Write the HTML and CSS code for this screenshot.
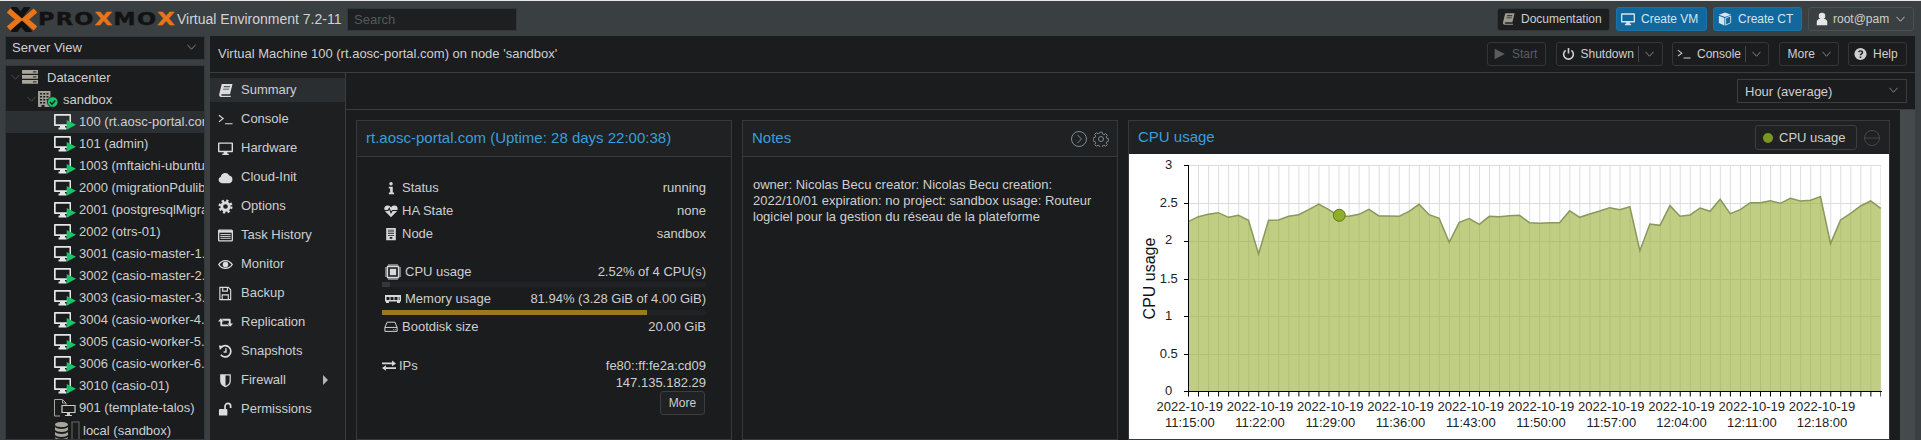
FILE: index.html
```html
<!DOCTYPE html>
<html lang="en">
<head>
  <meta charset="UTF-8">
  <title>sandbox - Proxmox Virtual Environment</title>
  <link rel="stylesheet" href="styles.css">
</head>
<body>

<svg class="icon-defs">
  <symbol id="i-chev" viewBox="0 0 10 6"><path d="M.5.5 5 5.500 9.500.5" fill="none" stroke="currentColor"/></symbol>
  <symbol id="i-book" viewBox="0 0 16 16"><path fill="currentColor" fill-rule="evenodd" d="M4 1h11.500l-2.700 11H4.500c-1.500 0-1.500 1.700 0 1.700h9.300l-.4 1.300H3.500C1.500 15 1 13.500 1.300 12zm2.300 2.500-.3 1h6.500l.3-1zM5.600 6l-.3 1h6.500l.3-1z"/></symbol>
  <symbol id="i-term" viewBox="0 0 16 16"><path fill="none" stroke="currentColor" stroke-width="1.200" d="m1 3.500 4.500 3.500L1 10.500M7.500 12.500H15.500"/></symbol>
  <symbol id="i-desktop" viewBox="0 0 16 16"><path fill="currentColor" fill-rule="evenodd" d="M1 1.500h14c.6 0 1 .4 1 1V11c0 .6-.4 1-1 1H9.800l.4 1.500H11.500V15h-7v-1.500h1.300L6.200 12H1c-.6 0-1-.4-1-1V2.500c0-.6.4-1 1-1zM1.500 3v7.300h13V3z"/></symbol>
  <symbol id="i-cloud" viewBox="0 0 16 16"><path fill="currentColor" d="M3.800 14a3.500 3.500 0 0 1-.8-6.800A4.800 4.800 0 0 1 12 5.800a4.200 4.200 0 0 1 .2 8.200z"/></symbol>
  <symbol id="i-gear" viewBox="0 0 16 16"><circle cx="8" cy="8" r="4" fill="none" stroke="currentColor" stroke-width="3"/><circle cx="8" cy="8" r="6.300" fill="none" stroke="currentColor" stroke-width="2.400" stroke-dasharray="2.500 2.450"/></symbol>
  <symbol id="i-gear-line" viewBox="0 0 16 16"><circle cx="8" cy="8" r="2.500" fill="none" stroke="currentColor"/><path fill="none" stroke="currentColor" d="M6.800.8h2.400l.4 2 1.500.7 1.800-1.100 1.700 1.700-1.100 1.800.7 1.500 2 .4v2.400l-2 .4-.7 1.500 1.100 1.800-1.700 1.700-1.800-1.100-1.500.7-.4 2H6.800l-.4-2-1.500-.7-1.800 1.100-1.700-1.700 1.100-1.800-.7-1.500-2-.4V6.800l2-.4.7-1.500-1.100-1.800 1.700-1.700 1.800 1.100 1.500-.7z" transform="translate(.4 .4) scale(.95)"/></symbol>
  <symbol id="i-list" viewBox="0 0 16 16"><rect x=".7" y="2.200" width="14.600" height="11.600" rx="1" fill="none" stroke="currentColor" stroke-width="1.400"/><path fill="currentColor" d="M1 2.500h14V5H1z"/><path stroke="currentColor" d="M2.500 7h11M2.500 9h11M2.500 11h11"/></symbol>
  <symbol id="i-eye" viewBox="0 0 16 16"><path fill="currentColor" fill-rule="evenodd" d="M0 8c2-3.200 4.800-4.800 8-4.800S14 4.800 16 8c-2 3.200-4.800 4.800-8 4.800S2 11.200 0 8zm1.600 0c1.700 2.200 3.900 3.500 6.400 3.500s4.700-1.300 6.400-3.500C12.700 5.800 10.500 4.500 8 4.500S3.300 5.800 1.600 8z"/><circle cx="8" cy="8" r="3" fill="currentColor"/></symbol>
  <symbol id="i-save" viewBox="0 0 16 16"><path fill="none" stroke="currentColor" stroke-width="1.200" d="M2 1.500h9l2.500 2.500v10.500H2zM5 1.500v4h5v-4M4.500 14.500V9.500h6.500v5"/></symbol>
  <symbol id="i-retweet" viewBox="0 0 16 16"><path fill="currentColor" d="M0 7 3 3.500 6 7H4.500v3H10l2 2H3.500c-.6 0-1-.4-1-1V7zM16 9l-3 3.500L10 9h1.500V6H6L4 4h8.500c.6 0 1 .4 1 1v4z"/></symbol>
  <symbol id="i-history" viewBox="0 0 16 16"><path fill="none" stroke="currentColor" stroke-width="1.800" d="M3.500 3.500A6 6 0 1 1 3 11.500"/><path fill="currentColor" d="M1 1.500 6 2 2 6.500z"/><path fill="none" stroke="currentColor" stroke-width="1.500" d="M8.500 4.500V8.500H6"/></symbol>
  <symbol id="i-shield" viewBox="0 0 16 16"><path fill="none" stroke="currentColor" stroke-width="1.300" d="M3 2h10v6.500c0 3-2.500 5-5 6-2.500-1-5-3-5-6z"/><path fill="currentColor" d="M3 2h5v12.500c-2.500-1-5-3-5-6z"/></symbol>
  <symbol id="i-unlock" viewBox="0 0 16 16"><rect x="1" y="7.500" width="9" height="7" rx="1" fill="currentColor"/><path fill="none" stroke="currentColor" stroke-width="1.800" d="M7.500 7.500V4.500a3 3 0 0 1 6 0v2"/></symbol>
  <symbol id="i-info" viewBox="0 0 16 16"><circle cx="8" cy="3" r="2" fill="currentColor"/><path fill="currentColor" d="M5.500 6.500H10V13h1.500v2h-6v-2H7V8.500H5.500z"/></symbol>
  <symbol id="i-heart" viewBox="0 0 16 16"><path fill="currentColor" d="M8 15 1.500 8.500C-.5 6.300 0 2 4 1.800 6 1.700 7.300 2.800 8 4c.7-1.200 2-2.300 4-2.200 4 .2 4.500 4.500 2.500 6.700z"/><path fill="none" stroke="#1a1c1e" stroke-width="1.200" d="M0 7.500h4.500l1.500-2.500 2 5 1.500-2.500H16"/></symbol>
  <symbol id="i-node" viewBox="0 0 16 16"><path fill="currentColor" fill-rule="evenodd" d="M2.500 1h11v14h-11zM4.500 3v1h7V3zm0 2v1h7V5zm0 2v1h7V7zm0 2v1h7V9zm2 2.500v2h3v-2z"/></symbol>
  <symbol id="i-cpu" viewBox="0 0 16 16"><path fill="none" stroke="currentColor" stroke-width="1.300" d="M2.500 2.500h11v11h-11z"/><rect x="4.800" y="4.800" width="6.400" height="6.400" fill="currentColor"/><path fill="none" stroke="currentColor" d="M4 0v2M6 0v2M8 0v2M10 0v2M12 0v2M4 14v2M6 14v2M8 14v2M10 14v2M12 14v2M0 4h2M0 6h2M0 8h2M0 10h2M0 12h2M14 4h2M14 6h2M14 8h2M14 10h2M14 12h2"/></symbol>
  <symbol id="i-mem" viewBox="0 0 16 8"><path fill="currentColor" fill-rule="evenodd" d="M0 0h16v6.500h-1V8h-3V6.500H4V8H1V6.500H0zM1.500 2v3h3V2zm4 0v3h3V2zm4 0v3h3V2zm4.300 0v3h.7V2z"/></symbol>
  <symbol id="i-hdd" viewBox="0 0 16 16"><path fill="none" stroke="currentColor" stroke-width="1.100" d="M1 8.500 3.500 2.500h9l2.500 6v4.500H1zM1 8.500h14"/><path stroke="currentColor" d="M10.500 11h1M12.500 11h1"/></symbol>
  <symbol id="i-swap" viewBox="0 0 16 16"><path fill="currentColor" d="M0 4h11.500V1.500L16 5l-4.500 3.500V6H0zM16 12H4.500v2.500L0 11l4.500-3.500V10H16z" transform="translate(0 .5) scale(1 .9)"/></symbol>
  <symbol id="i-cube" viewBox="0 0 16 16"><path fill="currentColor" d="M8 .5 15 3 8 5.700 1 3zM1 4.300 7.300 6.800V15.500L1 12.500z"/><path fill="none" stroke="currentColor" d="M8.700 7 14.500 4.500v7.700L8.700 15z"/></symbol>
  <symbol id="i-user" viewBox="0 0 16 16"><circle cx="8" cy="4.500" r="3.700" fill="currentColor"/><path fill="currentColor" d="M2 15v-3.500C2 9.500 3.500 8 5 8h6c1.500 0 3 1.500 3 3.500V15z"/></symbol>
  <symbol id="i-play" viewBox="0 0 16 16"><path fill="currentColor" d="M2 1.500 14.500 8 2 14.500z"/></symbol>
  <symbol id="i-power" viewBox="0 0 16 16"><path fill="none" stroke="currentColor" stroke-width="2" d="M4.500 3.500a6 6 0 1 0 7 0M8 .5v7"/></symbol>
  <symbol id="i-help" viewBox="0 0 16 16"><path fill="currentColor" fill-rule="evenodd" d="M8 .5a7.500 7.500 0 1 0 0 15 7.500 7.500 0 0 0 0-15zM7 11h2v2H7zm0-1.500c0-2.200 2.300-2.200 2.300-3.500 0-.7-.6-1-1.300-1-.8 0-1.300.4-1.700 1L4.900 5.200C5.500 4 6.600 3.300 8.100 3.300c1.800 0 3.200 1 3.200 2.700 0 2.200-2.400 2.300-2.400 3.500z"/></symbol>
  <symbol id="i-server" viewBox="0 0 16 14"><path fill="#a8a59c" d="M0 0h16v3.800H0zM0 5h16v3.800H0zM0 10h16v3.800H0z"/><path stroke="#1a1c1e" d="M11 1.900h3.500M11 6.900h3.500M11 11.900h3.500"/></symbol>
  <symbol id="i-building" viewBox="0 0 20 18"><path fill="#a09c94" fill-rule="evenodd" d="M0 1h12.500v16H0zM2 3v1.500h2V3zm3.200 0v1.500h2V3zm3.300 0v1.500h2V3zM2 6v1.500h2V6zm3.200 0v1.500h2V6zm3.300 0v1.500h2V6zM2 9v1.500h2V9zm3.200 0v1.500h2V9zm3.300 0v1.500h2V9zM2 12v1.500h2V12zm3.200 0v1.500h2V12zM3.500 15v2h3v-2z"/><circle cx="14.700" cy="12" r="5.300" fill="#1bc46a" stroke="#1a1c1e" stroke-width=".8"/><path fill="none" stroke="#1a1c1e" stroke-width="1.500" d="m12 12 2 2.200 3.300-3.700"/></symbol>
  <symbol id="i-vm" viewBox="0 0 22 16"><path fill="#e6e6e6" fill-rule="evenodd" d="M1 0h15c.6 0 1 .4 1 1v10c0 .6-.4 1-1 1H11v1.500H12.500V15.500H4.500V13.500H6V12H1c-.6 0-1-.4-1-1V1c0-.6.4-1 1-1zM1.700 1.700v8.500h13.800V1.700z"/><path fill="#16c46c" d="M12.700 6 22 10.800l-9.300 4.900z"/></symbol>
  <symbol id="i-template" viewBox="0 0 22 18"><path fill="none" stroke="#a8a59c" d="M.5 17V.5h8L12 4v2M.5 17H6M8.500.5V4H12"/><path fill="none" stroke="#d0cdc4" stroke-width="1.200" d="M8 6.500h13v7H8z"/><path fill="#d0cdc4" d="M13 14h3v2h2v1h-7v-1h2z"/></symbol>
  <symbol id="i-store" viewBox="0 0 26 20"><path fill="#a8a59c" d="M1 3.500c0-3.500 13-3.500 13 0s-13 3.500-13 0zM1 6c2 2.500 11 2.500 13 0v3c-2 2.500-11 2.500-13 0zM1 11c2 2.500 11 2.500 13 0v3c-2 2.500-11 2.500-13 0zM1 16c2 2.500 11 2.500 13 0 0 5-13 5-13 0z"/><rect x="18" y="1" width="7" height="18" fill="none" stroke="#6a6862"/></symbol>
</svg>

<div class="page">
  <header class="topbar">
    <div class="logo">
      <svg class="logo-x" viewBox="0 0 30 25">
        <path class="logo-dark" d="M6 -1 13.500 9 21 -1M6 26 14 16 23 26"/>
        <path class="logo-orange" d="M1.500 3.500 12 12.500 1.500 21.500M28.500 3.500 18 12.500 28.500 21.500"/>
      </svg>
      <span class="logo-word">PRO<b>X</b>MO<b>X</b></span>
    </div>
    <span class="version">Virtual Environment 7.2-11</span>
    <input class="search" type="text" placeholder="Search">
    <div class="top-actions">
      <button class="btn btn-docs"><svg class="icon"><use href="#i-book"/></svg>Documentation</button>
      <button class="btn btn-blue btn-vm"><svg class="icon"><use href="#i-desktop"/></svg>Create VM</button>
      <button class="btn btn-blue btn-ct"><svg class="icon"><use href="#i-cube"/></svg>Create CT</button>
      <button class="btn btn-user"><svg class="icon"><use href="#i-user"/></svg>root@pam<svg class="chev"><use href="#i-chev"/></svg></button>
    </div>
  </header>

  <aside class="side">
    <div class="view-combo">Server View<svg class="chev"><use href="#i-chev"/></svg></div>
    <ul class="tree">
      <li class="tree-row"><svg class="chev tree-chev"><use href="#i-chev"/></svg><svg class="tree-server"><use href="#i-server"/></svg>Datacenter</li>
      <li class="tree-row tree-node"><svg class="chev tree-chev"><use href="#i-chev"/></svg><svg class="tree-building"><use href="#i-building"/></svg>sandbox</li>
      <li class="tree-row tree-leaf is-selected"><svg class="tree-vm"><use href="#i-vm"/></svg>100 (rt.aosc-portal.com)</li>
      <li class="tree-row tree-leaf"><svg class="tree-vm"><use href="#i-vm"/></svg>101 (admin)</li>
      <li class="tree-row tree-leaf"><svg class="tree-vm"><use href="#i-vm"/></svg>1003 (mftaichi-ubuntu)</li>
      <li class="tree-row tree-leaf"><svg class="tree-vm"><use href="#i-vm"/></svg>2000 (migrationPdulib)</li>
      <li class="tree-row tree-leaf"><svg class="tree-vm"><use href="#i-vm"/></svg>2001 (postgresqlMigration)</li>
      <li class="tree-row tree-leaf"><svg class="tree-vm"><use href="#i-vm"/></svg>2002 (otrs-01)</li>
      <li class="tree-row tree-leaf"><svg class="tree-vm"><use href="#i-vm"/></svg>3001 (casio-master-1.lan)</li>
      <li class="tree-row tree-leaf"><svg class="tree-vm"><use href="#i-vm"/></svg>3002 (casio-master-2.lan)</li>
      <li class="tree-row tree-leaf"><svg class="tree-vm"><use href="#i-vm"/></svg>3003 (casio-master-3.lan)</li>
      <li class="tree-row tree-leaf"><svg class="tree-vm"><use href="#i-vm"/></svg>3004 (casio-worker-4.lan)</li>
      <li class="tree-row tree-leaf"><svg class="tree-vm"><use href="#i-vm"/></svg>3005 (casio-worker-5.lan)</li>
      <li class="tree-row tree-leaf"><svg class="tree-vm"><use href="#i-vm"/></svg>3006 (casio-worker-6.lan)</li>
      <li class="tree-row tree-leaf"><svg class="tree-vm"><use href="#i-vm"/></svg>3010 (casio-01)</li>
      <li class="tree-row tree-leaf"><svg class="tree-vm tree-tpl"><use href="#i-template"/></svg>901 (template-talos)</li>
      <li class="tree-row tree-leaf tree-store"><svg class="tree-storage"><use href="#i-store"/></svg>local (sandbox)</li>
    </ul>
  </aside>

  <main class="main">
    <div class="titlebar">
      <span class="vm-title">Virtual Machine 100 (rt.aosc-portal.com) on node 'sandbox'</span>
      <div class="vm-actions">
        <button class="tool tool-start"><svg class="icon"><use href="#i-play"/></svg>Start</button>
        <button class="tool tool-shutdown"><svg class="icon"><use href="#i-power"/></svg>Shutdown<span class="tool-sep"></span><svg class="chev"><use href="#i-chev"/></svg></button>
        <button class="tool tool-console"><svg class="icon"><use href="#i-term"/></svg>Console<span class="tool-sep"></span><svg class="chev"><use href="#i-chev"/></svg></button>
        <button class="tool tool-more">More<svg class="chev"><use href="#i-chev"/></svg></button>
        <button class="tool tool-help"><svg class="icon"><use href="#i-help"/></svg>Help</button>
      </div>
    </div>

    <div class="workspace">
      <nav class="menu">
        <a class="menu-item is-active"><svg class="icon"><use href="#i-book"/></svg>Summary</a>
        <a class="menu-item"><svg class="icon"><use href="#i-term"/></svg>Console</a>
        <a class="menu-item"><svg class="icon"><use href="#i-desktop"/></svg>Hardware</a>
        <a class="menu-item"><svg class="icon"><use href="#i-cloud"/></svg>Cloud-Init</a>
        <a class="menu-item"><svg class="icon"><use href="#i-gear"/></svg>Options</a>
        <a class="menu-item"><svg class="icon"><use href="#i-list"/></svg>Task History</a>
        <a class="menu-item"><svg class="icon"><use href="#i-eye"/></svg>Monitor</a>
        <a class="menu-item"><svg class="icon"><use href="#i-save"/></svg>Backup</a>
        <a class="menu-item"><svg class="icon"><use href="#i-retweet"/></svg>Replication</a>
        <a class="menu-item"><svg class="icon"><use href="#i-history"/></svg>Snapshots</a>
        <a class="menu-item">
          <svg class="icon"><use href="#i-shield"/></svg>Firewall
          <span class="menu-arrow"></span>
        </a>
        <a class="menu-item"><svg class="icon"><use href="#i-unlock"/></svg>Permissions</a>
      </nav>

      <section class="content">
        <div class="range-bar">
          <div class="range-combo">Hour (average)<svg class="chev"><use href="#i-chev"/></svg></div>
        </div>
        <div class="scroller">
          <div class="panels">

            <div class="panel">
              <div class="panel-head"><h3>rt.aosc-portal.com (Uptime: 28 days 22:00:38)</h3></div>
              <div class="panel-body status">
                <div class="stat"><svg class="stat-icon"><use href="#i-info"/></svg><span class="stat-name">Status</span><span>running</span></div>
                <div class="stat"><svg class="stat-icon"><use href="#i-heart"/></svg><span class="stat-name">HA State</span><span>none</span></div>
                <div class="stat"><svg class="stat-icon"><use href="#i-node"/></svg><span class="stat-name">Node</span><span>sandbox</span></div>

                <div class="stat stat-gap"><svg class="stat-icon stat-wide"><use href="#i-cpu"/></svg><span class="stat-name">CPU usage</span><span>2.52% of 4 CPU(s)</span></div>
                <div class="meter"><div class="meter-fill meter-cpu" style="width:2.52%"></div></div>
                <div class="stat"><svg class="stat-icon stat-wide"><use href="#i-mem"/></svg><span class="stat-name">Memory usage</span><span>81.94% (3.28 GiB of 4.00 GiB)</span></div>
                <div class="meter"><div class="meter-fill meter-mem" style="width:81.94%"></div></div>
                <div class="stat"><svg class="stat-icon"><use href="#i-hdd"/></svg><span class="stat-name">Bootdisk size</span><span>20.00 GiB</span></div>

                <div class="stat stat-ips"><svg class="stat-icon stat-swap"><use href="#i-swap"/></svg><span class="stat-name">IPs</span><span class="ip-list">fe80::ff:fe2a:cd09<br>147.135.182.29</span></div>
                <div class="more-row"><button class="tool more-btn">More</button></div>
              </div>
            </div>

            <div class="panel">
              <div class="panel-head panel-head-notes">
                <h3>Notes</h3>
                <svg class="notes-tool" viewBox="0 0 16 16"><circle cx="8" cy="8" r="7.500" fill="none" stroke="currentColor"/><path fill="none" stroke="currentColor" d="m6.500 4 4 4-4 4"/></svg>
                <svg class="notes-tool"><use href="#i-gear-line"/></svg>
              </div>
              <div class="panel-body notes">owner: Nicolas Becu creator: Nicolas Becu creation: 2022/10/01 expiration: no project: sandbox usage: Routeur logiciel pour la gestion du réseau de la plateforme</div>
            </div>

            <div class="panel panel-chart">
              <div class="panel-head chart-head">
                <h3>CPU usage</h3>
                <div class="legend"><span class="legend-dot"></span>CPU usage</div>
                <svg class="legend-off" viewBox="0 0 16 16"><circle cx="8" cy="8" r="7.500" fill="none" stroke="currentColor"/><path stroke="currentColor" d="M1 8h14"/></svg>
              </div>
              <div class="chart-body">
                <svg class="chart" width="760" height="286" viewBox="0 0 760 286">
                  <!-- grid -->
                  <path class="chart-grid" d="M59 11.500H752M59 49.500H752M59 87.500H752M59 125.500H752M59 162.500H752M59 200.500H752"/>
                  <line class="chart-grid" x1="59" y1="124" x2="752" y2="124" stroke-width="226" stroke-dasharray="1 9.035"/>
                  <!-- one point per minute, x is the minute, y is in the group's own units -->
                  <g transform="translate(59.300 -44) scale(10.035 .3333)">
                    <polygon class="chart-area" points="0,843 0,335 1,320 2,313 3,308 4,322 5,316 6,331 7,432 8,331 9,330 10,319 11,314 12,299 13,282 14,299 15,318 16,319 17,313 18,298 19,318 20,318 21,319 22,304 23,283 24,314 25,325 26,397 27,337 28,326 29,343 30,319 31,320 32,317 33,316 34,338 35,340 36,338 37,338 38,302 39,322 40,312 41,303 42,293 43,299 44,290 45,422 46,342 47,346 48,287 49,319 50,315 51,294 52,304 53,268 54,311 55,299 56,278 57,278 58,272 59,280 60,265 61,273 62,271 63,260 64,401 65,330 66,310 67,288 68,273 69,295 69,843"/>
                    <polyline class="chart-line" points="0,335 1,320 2,313 3,308 4,322 5,316 6,331 7,432 8,331 9,330 10,319 11,314 12,299 13,282 14,299 15,318 16,319 17,313 18,298 19,318 20,318 21,319 22,304 23,283 24,314 25,325 26,397 27,337 28,326 29,343 30,319 31,320 32,317 33,316 34,338 35,340 36,338 37,338 38,302 39,322 40,312 41,303 42,293 43,299 44,290 45,422 46,342 47,346 48,287 49,319 50,315 51,294 52,304 53,268 54,311 55,299 56,278 57,278 58,272 59,280 60,265 61,273 62,271 63,260 64,401 65,330 66,310 67,288 68,273 69,295"/>
                  </g>
                  <circle class="chart-marker" cx="210.300" cy="61.300" r="6"/>
                  <!-- axes -->
                  <path class="chart-axis" d="M59.500 11V238M59 237.500H753M55 11.500h4M55 49.500h4M55 87.500h4M55 125.500h4M55 162.500h4M55 200.500h4M55 237.500h4"/>
                  <line class="chart-axis" x1="59" y1="240" x2="752" y2="240" stroke-width="5" stroke-dasharray="1 9.035"/>
                  <!-- labels -->
                  <g class="chart-ticks">
                    <text x="39.700" y="14.500">3</text>
                    <text x="39.700" y="53">2.5</text>
                    <text x="39.700" y="90">2</text>
                    <text x="39.700" y="129">1.5</text>
                    <text x="39.700" y="166">1</text>
                    <text x="39.700" y="203.500">0.5</text>
                    <text x="39.700" y="241">0</text>
                  </g>
                  <g class="chart-ticks">
                    <text x="60.800" y="256.500">2022-10-19</text><text x="60.800" y="272.500">11:15:00</text>
                    <text x="131" y="256.500">2022-10-19</text><text x="131" y="272.500">11:22:00</text>
                    <text x="201.300" y="256.500">2022-10-19</text><text x="201.300" y="272.500">11:29:00</text>
                    <text x="271.500" y="256.500">2022-10-19</text><text x="271.500" y="272.500">11:36:00</text>
                    <text x="341.800" y="256.500">2022-10-19</text><text x="341.800" y="272.500">11:43:00</text>
                    <text x="412" y="256.500">2022-10-19</text><text x="412" y="272.500">11:50:00</text>
                    <text x="482.300" y="256.500">2022-10-19</text><text x="482.300" y="272.500">11:57:00</text>
                    <text x="552.500" y="256.500">2022-10-19</text><text x="552.500" y="272.500">12:04:00</text>
                    <text x="622.800" y="256.500">2022-10-19</text><text x="622.800" y="272.500">12:11:00</text>
                    <text x="693" y="256.500">2022-10-19</text><text x="693" y="272.500">12:18:00</text>
                  </g>
                  <text class="chart-title" transform="translate(25.500 124.500) rotate(-90)">CPU usage</text>
                </svg>
              </div>
            </div>

          </div>
          <div class="scrollbar"></div>
        </div>
      </section>
    </div>
  </main>
</div>

</body>
</html>
```

FILE: styles.css
```css
* {
  box-sizing: border-box;
}

html, body {
  margin: 0;
  height: 440px;
  overflow: hidden;
}

body {
  font-family: "Liberation Sans", Arial, sans-serif;
  font-size: 13px;
  color: #cfcfcf;
  background-color: #3a3f42;
}

button {
  font: inherit;
  color: inherit;
}

.icon-defs {
  display: none;
}

.page {
  display: grid;
  grid-template-columns: 210px 1fr;
  grid-template-rows: 35px 404px;
  height: 440px;
  border-top: 1px solid #e8e8e8;
}

/* top bar */
.topbar {
  grid-column: 1 / 3;
  display: flex;
  align-items: center;
  padding: 1px 7px 0 0;
}

.logo {
  display: flex;
  align-items: center;
  width: 177px;
  padding-left: 7px;
  flex-shrink: 0;
}

.logo-x {
  width: 30px;
  height: 25px;
  margin-right: 1px;
  flex-shrink: 0;
}

.logo-dark {
  fill: none;
  stroke: #111;
  stroke-width: 5.500px;
}

.logo-orange {
  fill: none;
  stroke: #e8751a;
  stroke-width: 5.500px;
}

.logo-word {
  display: inline-block;
  font-family: "DejaVu Sans", sans-serif;
  font-weight: bold;
  font-size: 18px;
  letter-spacing: 1px;
  line-height: 1;
  color: #121212;
  white-space: nowrap;
  transform: scaleX(1.25);
  transform-origin: left center;
  -webkit-text-stroke: 0.4px currentColor;
}

.logo-word b {
  color: #e8751a;
}

.version {
  width: 170px;
  font-size: 14px;
  color: #d2d2d2;
  white-space: nowrap;
}

.search {
  width: 170px;
  height: 23px;
  padding: 0 6px;
  font: inherit;
  color: #ccc;
  background-color: #1d1f21;
  border: 1px solid #33373a;
}

.search::placeholder {
  color: #55595c;
}

.top-actions {
  margin-left: auto;
  display: flex;
  align-items: center;
  gap: 6px;
  font-size: 12px;
}

.btn {
  display: flex;
  align-items: center;
  height: 24px;
  padding: 0 8px 0 4px;
  font-size: 12px;
  border: 1px solid #33373a;
  border-radius: 3px;
  white-space: nowrap;
}

.btn .icon {
  width: 14px;
  height: 14px;
  margin-right: 6px;
  flex-shrink: 0;
}

.btn-docs {
  width: 113px;
  height: 23px;
  background-color: #1c1e20;
}

.btn-docs .icon {
  width: 13px;
  color: #9d9a90;
}

.btn-blue {
  background-color: #10689d;
  border-color: #1a73a8;
  color: #d8e4ec;
}

.btn-vm {
  width: 91px;
  padding-left: 3px;
}

.btn-vm .icon {
  width: 16px;
  margin-right: 5px;
}

.btn-ct {
  width: 89px;
}

.btn-user {
  width: 106px;
  padding-left: 6px;
  background-color: #3a3f42;
  border-color: #4b5053;
}

.btn-user .icon {
  margin-right: 4px;
  color: #e6e6e6;
}

.btn-user .chev {
  margin-left: auto;
  color: #d0d0d0;
}

.chev {
  width: 9px;
  height: 6px;
  color: #8c9093;
  flex-shrink: 0;
}

/* left tree */
.side {
  padding: 0 5px;
  min-width: 0;
}

.view-combo {
  display: flex;
  align-items: center;
  justify-content: space-between;
  height: 24px;
  padding: 0 8px 2px 6px;
  background-color: #1a1c1e;
  border: 1px solid #33373a;
}

.view-combo .chev {
  margin-bottom: 1px;
}

.tree {
  list-style: none;
  margin: 5px 0 0;
  padding: 1px 0 0;
  height: 375px;
  overflow: hidden;
  background-color: #1a1c1e;
  border: 1px solid #33373a;
}

.tree-row {
  display: flex;
  align-items: center;
  height: 22px;
  padding: 0 0 2px 5px;
  white-space: nowrap;
}

.tree-node {
  padding-left: 21px;
}

.tree-leaf {
  padding-left: 48px;
}

.tree-store {
  margin-top: 1px;
}

.is-selected {
  background-color: #2d3033;
}

.tree-chev {
  margin-right: 2px;
  color: #4e5255;
}

.tree-server {
  width: 16px;
  height: 14px;
  margin-right: 9px;
}

.tree-building {
  width: 20px;
  height: 18px;
  margin-right: 5px;
}

.tree-vm {
  width: 22px;
  height: 16px;
  margin: 2px 3px 0 0;
  flex-shrink: 0;
}

.tree-tpl {
  height: 18px;
}

.tree-storage {
  width: 26px;
  height: 20px;
  margin: 2px 3px 0 0;
  flex-shrink: 0;
}

/* main area */
.main {
  display: flex;
  flex-direction: column;
  margin-right: 6px;
  min-width: 0;
  background-color: #1a1c1e;
}

.titlebar {
  display: flex;
  align-items: center;
  justify-content: space-between;
  height: 37px;
  padding: 0 8px;
  border-bottom: 1px solid #3a3e41;
  flex-shrink: 0;
}

.vm-title {
  margin-bottom: 2px;
}

.vm-actions {
  display: flex;
  align-items: center;
  gap: 9.500px;
  font-size: 12px;
}

.tool {
  display: flex;
  align-items: center;
  height: 24px;
  padding: 0 0 0 5px;
  font-size: 12px;
  background-color: transparent;
  border: 1px solid #33373a;
  border-radius: 3px;
  white-space: nowrap;
}

.tool .icon {
  width: 13px;
  height: 14px;
  margin-right: 6px;
  flex-shrink: 0;
}

.tool-start {
  width: 59px;
  color: #5a5d60;
}

.tool-shutdown {
  width: 107px;
}

.tool-console {
  width: 97px;
  padding-left: 4px;
}

.tool-console .icon {
  width: 14px;
}

.tool-more {
  justify-content: space-between;
  width: 60px;
  padding: 0 7px 0 8px;
}

.tool-help {
  width: 59px;
}

.tool-sep {
  width: 1px;
  height: 16px;
  margin: 0 6px 0 4px;
  background-color: #44484b;
}

.workspace {
  flex: 1;
  display: flex;
  min-height: 0;
}

.menu {
  width: 136px;
  padding-top: 5px;
  background-color: #1d1f21;
  border-right: 1px solid #3a3e41;
  flex-shrink: 0;
}

.menu-item {
  display: flex;
  align-items: center;
  height: 24px;
  margin-bottom: 5px;
  padding: 0 0 2px 8px;
}

.menu-item .icon {
  width: 15px;
  height: 15px;
  margin: 2px 8px 0 0;
  color: #dcdcdc;
}

.menu-item.is-active {
  background-color: #2a2e31;
}

.menu-arrow {
  width: 0;
  height: 0;
  margin: 2px 17px 0 auto;
  border-left: 5px solid #b5b5b5;
  border-top: 5px solid transparent;
  border-bottom: 5px solid transparent;
}

.content {
  flex: 1;
  display: flex;
  flex-direction: column;
  min-width: 0;
}

.range-bar {
  display: flex;
  align-items: center;
  justify-content: flex-end;
  height: 37px;
  padding-right: 8px;
  border-bottom: 1px solid #3a3e41;
  flex-shrink: 0;
}

.range-combo {
  display: flex;
  align-items: center;
  justify-content: space-between;
  width: 170px;
  height: 24px;
  padding: 0 8px 0 7px;
  border: 1px solid #3a3e41;
}

.range-combo .chev {
  margin-bottom: 3px;
}

.scroller {
  flex: 1;
  display: flex;
  min-height: 0;
}

.panels {
  flex: 1;
  display: grid;
  grid-template-columns: 375.500px 375.500px 1fr;
  column-gap: 10.500px;
  padding: 10px 10.500px 0 10px;
  min-width: 0;
}

.scrollbar {
  width: 15px;
  background-color: #454a4c;
  flex-shrink: 0;
}

/* panels */
.panel {
  display: flex;
  flex-direction: column;
  height: 320px;
  border: 1px solid #35393c;
}

.panel-head {
  display: flex;
  align-items: center;
  height: 36px;
  padding: 0 9px;
  background-color: #1f2123;
  border-bottom: 1px solid #35393c;
  flex-shrink: 0;
}

.panel-head h3 {
  flex: 1;
  margin: 0 0 2px;
  font-size: 15px;
  font-weight: normal;
  color: #3a9fda;
  white-space: nowrap;
}

.panel-head-notes {
  padding-right: 8px;
}

.status {
  padding: 19px 24.500px 0 25px;
}

.stat {
  display: flex;
  align-items: center;
  justify-content: flex-end;
  height: 23px;
}

.stat-icon {
  width: 14px;
  height: 14px;
  margin: 0 4px 0 2px;
  color: #d8d8d8;
  flex-shrink: 0;
}

.stat-wide {
  width: 16px;
  height: 16px;
  margin: 0 4px 0 3px;
}

.stat-swap {
  margin: 0 3px 0 0;
}

.stat-name {
  margin-right: auto;
}

.stat-gap {
  margin-top: 16px;
  height: 21px;
}

.meter {
  height: 5px;
  background-color: #202225;
}

.meter-fill {
  height: 5px;
}

.meter-cpu {
  background-color: #34383b;
}

.meter-mem {
  background-color: #9b7a1f;
}

.stat-ips {
  align-items: flex-start;
  height: auto;
  margin-top: 19px;
  line-height: 17px;
}

.stat-ips .stat-icon {
  margin-top: 2px;
}

.ip-list {
  text-align: right;
}

.more-row {
  display: flex;
  justify-content: flex-end;
  padding-right: 1px;
}

.more-btn {
  justify-content: center;
  width: 45px;
  padding: 0;
  background-color: #1f2123;
  border-color: #3a3e41;
}

.notes {
  padding: 20px 10px;
  line-height: 16px;
}

.notes-tool {
  width: 16px;
  height: 16px;
  margin-left: 6px;
  color: #7d8b95;
}

.chart-head {
  height: 33px;
  border-bottom: 0;
}

.legend {
  display: flex;
  align-items: center;
  width: 102px;
  height: 25px;
  padding-left: 7px;
  border: 1px solid #3a3e41;
  border-radius: 3px;
}

.legend-dot {
  width: 10px;
  height: 10px;
  margin-right: 6px;
  border-radius: 50%;
  background-color: #7a9622;
}

.legend-off {
  width: 16px;
  height: 16px;
  margin-left: 7px;
  color: #45494c;
}

.chart-body {
  flex: 1;
  background-color: #fff;
  overflow: hidden;
}

/* chart parts */
.chart {
  display: block;
}

.chart-grid {
  fill: none;
  stroke: #ddd;
}

.chart-area {
  fill: #94ae2f;
  fill-opacity: 0.6;
}

.chart-line {
  fill: none;
  stroke: #87985c;
  stroke-width: 1.500px;
  vector-effect: non-scaling-stroke;
}

.chart-marker {
  fill: #90ad2c;
  stroke: #5f7a10;
}

.chart-axis {
  fill: none;
  stroke: #000;
}

.chart-ticks text {
  font-size: 13px;
  text-anchor: middle;
  fill: #222;
}

.chart-title {
  font-size: 16px;
  text-anchor: middle;
  fill: #111;
}
```
